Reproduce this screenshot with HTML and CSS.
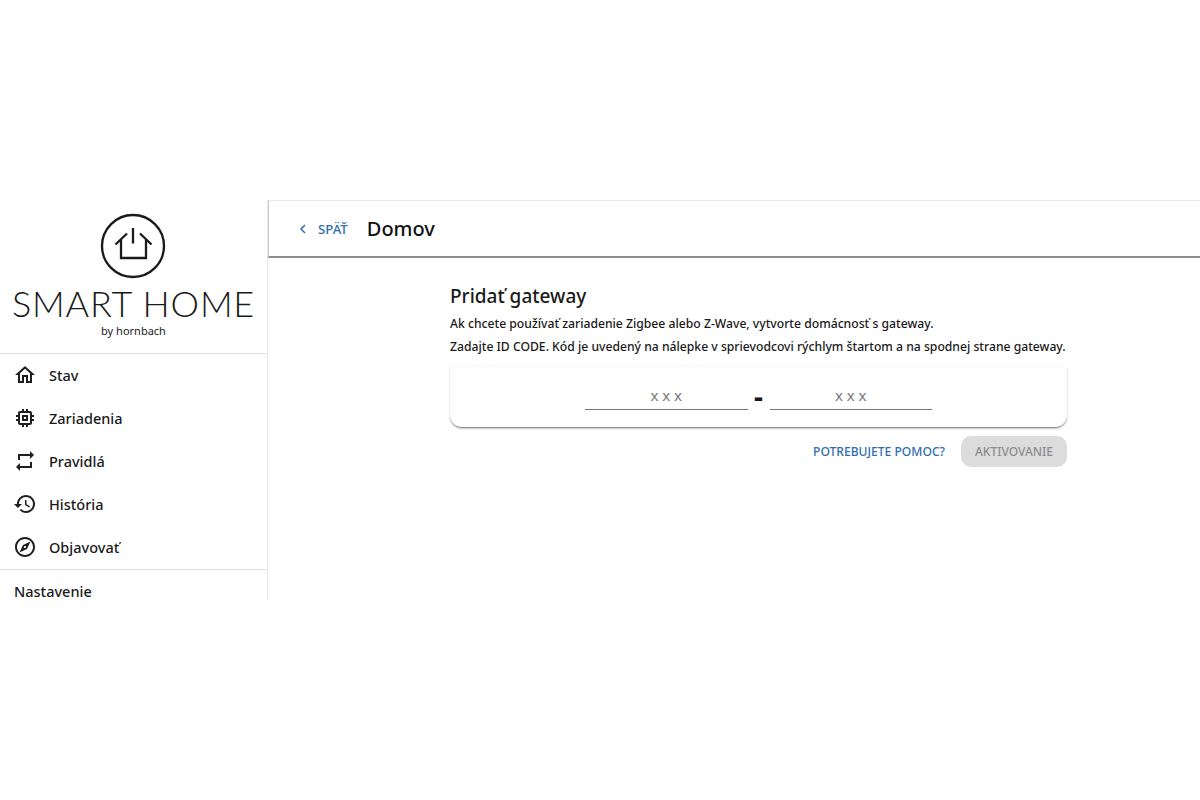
FILE: index.html
```html
<!DOCTYPE html>
<html lang="sk">
<head>
    <meta charset="UTF-8">
    <meta name="viewport" content="width=device-width, initial-scale=1.0">
    <title>Smart Home</title>
    <link rel="stylesheet" href="styles.css">
</head>
<body>
    <div class="app">
        <aside class="sidebar">
            <div class="brand">
                <svg class="brand-icon" width="66" height="66" viewBox="0 0 66 66" fill="none" stroke="#1a1a1a" stroke-width="2.300">
                    <circle cx="33" cy="33" r="31"/>
                    <path d="M15.500 31.500 L27 20.500 M21 27 V45 H46 V27 M40 20.500 L51.500 31.500"/>
                    <path d="M33 15 V30.500"/>
                </svg>
                <div class="brand-name">SMART HOME</div>
                <div class="brand-sub">by hornbach</div>
            </div>
            <nav class="menu">
                <a class="menu-item">
                    <svg width="24" height="24" viewBox="0 0 24 24" fill="#1f1f1f"><path d="M12 5.690l5 4.500V18h-2v-6H9v6H7v-7.810l5-4.500M12 3L2 12h3v8h6v-6h2v6h6v-8h3L12 3z"/></svg>
                    <span>Stav</span>
                </a>
                <a class="menu-item">
                    <svg width="24" height="24" viewBox="0 0 24 24" fill="#1f1f1f"><path d="M15 9H9v6h6V9zm-2 4h-2v-2h2v2zm8-2V9h-2V7c0-1.100-.9-2-2-2h-2V3h-2v2h-2V3H9v2H7c-1.100 0-2 .9-2 2v2H3v2h2v2H3v2h2v2c0 1.100.9 2 2 2h2v2h2v-2h2v2h2v-2h2c1.100 0 2-.9 2-2v-2h2v-2h-2v-2h2zm-4 6H7V7h10v10z"/></svg>
                    <span>Zariadenia</span>
                </a>
                <a class="menu-item">
                    <svg width="24" height="24" viewBox="0 0 24 24" fill="#1f1f1f"><path d="M7 7h10v3l4-4-4-4v3H5v6h2V7zm10 10H7v-3l-4 4 4 4v-3h12v-6h-2v4z"/></svg>
                    <span>Pravidlá</span>
                </a>
                <a class="menu-item">
                    <svg width="24" height="24" viewBox="0 0 24 24" fill="#1f1f1f"><path d="M13 3c-4.970 0-9 4.030-9 9H1l3.890 3.890.07.140L9 12H6c0-3.870 3.130-7 7-7s7 3.130 7 7-3.130 7-7 7c-1.930 0-3.680-.79-4.940-2.060l-1.420 1.420C8.270 19.990 10.510 21 13 21c4.970 0 9-4.030 9-9s-4.030-9-9-9zm-1 5v5l4.280 2.540.72-1.210-3.500-2.080V8H12z"/></svg>
                    <span>História</span>
                </a>
                <a class="menu-item">
                    <svg width="24" height="24" viewBox="0 0 24 24" fill="#1f1f1f"><path d="M12 2C6.480 2 2 6.480 2 12s4.480 10 10 10 10-4.480 10-10S17.520 2 12 2zm0 18c-4.410 0-8-3.590-8-8s3.590-8 8-8 8 3.590 8 8-3.590 8-8 8zm-5.500-2.500l7.510-3.490L17.500 6.500 9.990 9.990 6.500 17.500zm5.500-6.600c.61 0 1.100.49 1.100 1.100s-.49 1.100-1.100 1.100-1.100-.49-1.100-1.100.49-1.100 1.100-1.100z"/></svg>
                    <span>Objavovať</span>
                </a>
            </nav>
            <div class="settings">Nastavenie</div>
        </aside>

        <main class="main">
            <header class="topbar">
                <a class="back">
                    <svg width="10" height="12" viewBox="0 0 10 12" fill="none" stroke="#2f6db0" stroke-width="1.500"><path d="M7 2 L3 6 L7 10"/></svg>
                    <span>SPÄŤ</span>
                </a>
                <h1>Domov</h1>
            </header>

            <section class="content">
                <h2>Pridať gateway</h2>
                <p>Ak chcete používať zariadenie Zigbee alebo Z-Wave, vytvorte domácnosť s gateway.</p>
                <p>Zadajte ID CODE. Kód je uvedený na nálepke v sprievodcovi rýchlym štartom a na spodnej strane gateway.</p>

                <div class="code-card">
                    <div class="code-field">x x x</div>
                    <div class="code-dash">-</div>
                    <div class="code-field">x x x</div>
                </div>

                <div class="actions">
                    <a class="help">POTREBUJETE POMOC?</a>
                    <button class="activate" disabled>AKTIVOVANIE</button>
                </div>
            </section>
        </main>
    </div>
</body>
</html>
```

FILE: styles.css
```css
* {
    box-sizing: border-box;
}
body {
    margin: 0;
    background: #fff;
    font-family: "Noto Sans", "Open Sans", sans-serif;
    color: #1a1a1a;
}
.app {
    display: flex;
    height: 400px;
    margin-top: 200px;
    overflow: hidden;
}
.sidebar {
    width: 268px;
    flex-shrink: 0;
    border-right: 1px solid #e6e6e6;
}
.brand {
    height: 154px;
    padding-top: 13px;
    border-bottom: 1px solid #dcdcdc;
    text-align: center;
}
.brand-icon {
    display: block;
    margin: 0 auto;
    position: relative;
    left: -1px;
}
.brand-name {
    margin-top: 4px;
    font-family: Lato, sans-serif;
    font-weight: 300;
    font-size: 36px;
    letter-spacing: 0.8px;
    line-height: 40px;
    white-space: nowrap;
}
.brand-sub {
    font-size: 11px;
    line-height: 16px;
    margin-top: 0;
}
.menu {
    height: 217px;
    margin-top: -1px;
    border-bottom: 1px solid #dcdcdc;
}
.menu-item {
    display: flex;
    align-items: center;
    height: 43px;
    padding-left: 13px;
    font-size: 14.500px;
    font-weight: 500;
}
.menu-item svg {
    margin-right: 12px;
}
.settings {
    padding: 9px 14px;
    font-size: 14.500px;
    font-weight: 500;
    line-height: 24px;
}
.main {
    flex: 1;
}
.topbar {
    display: flex;
    align-items: center;
    height: 58px;
    padding-left: 29px;
    border-top: 1px solid #e8e8e8;
    border-bottom: 2px solid #8c8c8c;
    border-left: 1px solid #ccc;
}
.back {
    display: flex;
    align-items: center;
    gap: 10px;
    color: #2f6db0;
    font-size: 13.200px;
    font-weight: 500;
}
.topbar h1 {
    margin: 0 0 0 19px;
    font-size: 20px;
    font-weight: 500;
    color: #111;
}
.content {
    width: 617px;
    margin-left: 182px;
    padding-top: 26px;
}
.content h2 {
    margin: 0 0 3px;
    font-size: 19px;
    line-height: 25px;
    font-weight: 500;
}
.content p {
    margin: 0;
    font-size: 12.180px;
    line-height: 23px;
    font-weight: 500;
    white-space: nowrap;
}
.code-card {
    display: flex;
    justify-content: center;
    align-items: flex-end;
    height: 61px;
    margin-top: 9px;
    padding-bottom: 17px;
    border-radius: 0 0 12px 12px;
    border-bottom: 1px solid #8f8f8f;
    box-shadow: 0 1px 2px rgba(0, 0, 0, 0.2), 0 0 2px rgba(0, 0, 0, 0.08);
}
.code-field {
    width: 162.500px;
    height: 24px;
    border-bottom: 1px solid #777;
    text-align: center;
    color: #777;
    font-size: 15px;
    line-height: 18px;
}
.code-dash {
    width: 22px;
    height: 24px;
    text-align: center;
    font-size: 28px;
    line-height: 20px;
    font-weight: 700;
}
.actions {
    display: flex;
    justify-content: flex-end;
    align-items: center;
    gap: 16px;
    margin-top: 8px;
}
.help {
    color: #2f6db0;
    font-size: 12.100px;
    font-weight: 500;
}
.activate {
    width: 106px;
    height: 31px;
    padding: 0;
    border: none;
    border-radius: 10px;
    background: #dcdcdc;
    color: #8c8c8c;
    font-family: inherit;
    font-size: 12px;
    font-weight: 500;
}
```
